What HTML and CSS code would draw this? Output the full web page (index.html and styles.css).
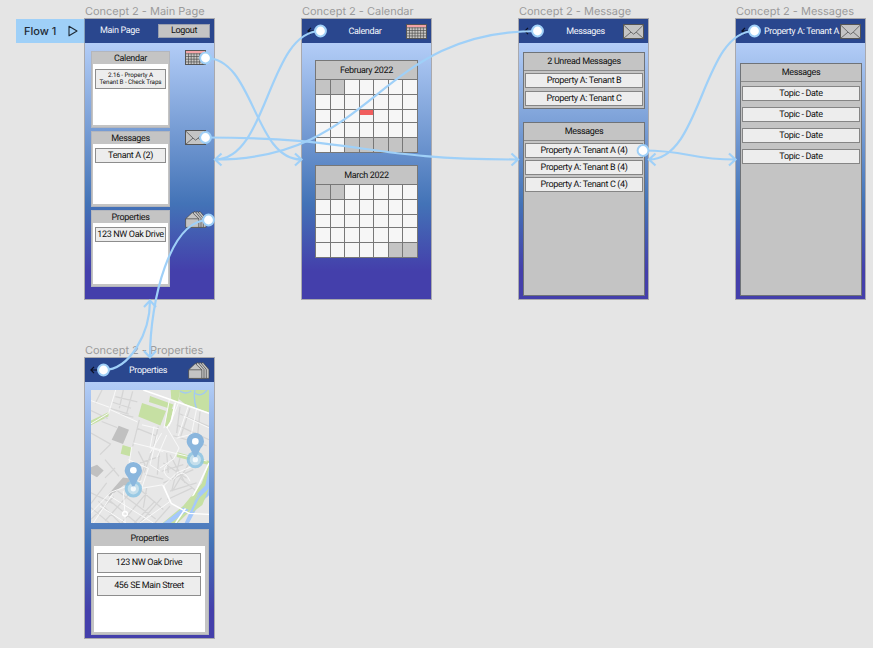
FILE: index.html
```html
<!DOCTYPE html>
<html lang="en">
<head>
<meta charset="utf-8">
<title>Concept 2 prototype</title>
<link rel="stylesheet" href="styles.css">
</head>
<body>
<svg class="defs" aria-hidden="true">
  <symbol id="calendar" viewBox="0 0 21 15">
    <rect x=".5" y=".5" width="20" height="14" fill="#c9c7c4" stroke="#555"/>
    <path d="M1 1h19v2.300H1z" fill="#f4a3a6"/>
    <path d="M1 3.800h19M1 6.500h19M1 9.200h19M1 11.900h19M3.500 3.500v11M6.200 3.500v11M9 3.500v11M11.800 3.500v11M14.600 3.500v11M17.400 3.500v11" stroke="#4a4a4a" stroke-width=".65"/>
  </symbol>
  <symbol id="mail" viewBox="0 0 21 15">
    <rect x=".5" y=".5" width="20" height="14" fill="#c4c4c4" stroke="#555"/>
    <path d="M.7 1l7.300 7.100 2.600 2.100 2.600-2.100L20.300 1M.7 14.300L8 8.100M20.300 14.300l-7.100-6.200" fill="none" stroke="#555" stroke-width=".8"/>
  </symbol>
  <symbol id="houses" viewBox="0 0 22 17">
    <g fill="#c4c4c4" stroke="#444" stroke-width=".7" stroke-linejoin="round">
      <path d="M9 7l5-6.300h1.200L21 7.500v8.900H9z"/>
      <path d="M7 7l4.500-6.300h1.200L18.300 7.500v8.900H7z"/>
      <path d="M5 7L9 .7h1.200L16 7.500v8.900H5z"/>
      <path d="M.6 7.800L7.300 1.500l6.500 6.300v8.600H.6zM.6 7.800h13.200"/>
    </g>
  </symbol>
  <symbol id="back" viewBox="0 0 8 8">
    <path d="M7.500 4H1M4 .8L.9 4 4 7.200" fill="none" stroke="#0b1024" stroke-width="1.200"/>
  </symbol>
</svg>

<main class="canvas">
  <div class="flow"><span>Flow 1</span><svg width="10" height="12" viewBox="0 0 10 12"><path d="M1 1.200L9 6l-8 4.800z" fill="none" stroke="#1e2a35" stroke-width="1.100" stroke-linejoin="round"/></svg></div>

  <section class="node node-main">
    <h2 class="label">Concept 2 - Main Page</h2>
    <div class="frame">
      <header class="bar bar-main"><span class="title">Main Page</span><span class="logout">Logout</span></header>
      <div class="home">
        <div class="cards">
          <div class="card"><h3>Calendar</h3><div class="paper"><p class="item event">2.16 - Property A<br>Tenant B - Check Traps</p></div></div>
          <div class="card"><h3>Messages</h3><div class="paper"><p class="item">Tenant A (2)</p></div></div>
          <div class="card"><h3>Properties</h3><div class="paper"><p class="item">123 NW Oak Drive</p></div></div>
        </div>
        <div class="shortcuts">
          <svg class="icon"><use href="#calendar"/></svg>
          <svg class="icon"><use href="#mail"/></svg>
          <svg class="icon-house"><use href="#houses"/></svg>
        </div>
      </div>
    </div>
  </section>

  <section class="node node-calendar">
    <h2 class="label">Concept 2 - Calendar</h2>
    <div class="frame">
      <header class="bar"><svg class="back"><use href="#back"/></svg><span class="title">Calendar</span><svg class="icon"><use href="#calendar"/></svg></header>
      <div class="months">
        <div class="month"><h3>February 2022</h3>
          <i class="off"></i><i class="off"></i><i></i><i></i><i></i><i></i><i></i>
          <i></i><i></i><i></i><i></i><i></i><i></i><i></i>
          <i></i><i></i><i></i><i class="due"></i><i></i><i></i><i></i>
          <i></i><i></i><i></i><i></i><i></i><i></i><i></i>
          <i></i><i></i><i class="off"></i><i class="off"></i><i class="off"></i><i class="off"></i><i class="off"></i>
        </div>
        <div class="month"><h3>March 2022</h3>
          <i class="off"></i><i class="off"></i><i></i><i></i><i></i><i></i><i></i>
          <i></i><i></i><i></i><i></i><i></i><i></i><i></i>
          <i></i><i></i><i></i><i></i><i></i><i></i><i></i>
          <i></i><i></i><i></i><i></i><i></i><i></i><i></i>
          <i></i><i></i><i></i><i></i><i></i><i class="off"></i><i class="off"></i>
        </div>
      </div>
    </div>
  </section>

  <section class="node node-message">
    <h2 class="label">Concept 2 - Message</h2>
    <div class="frame">
      <header class="bar"><svg class="back"><use href="#back"/></svg><span class="title">Messages</span><svg class="icon"><use href="#mail"/></svg></header>
      <div class="lists">
        <div class="panel unread"><h3>2 Unread Messages</h3><p class="row">Property A: Tenant B</p><p class="row">Property A: Tenant C</p></div>
        <div class="panel inbox"><h3>Messages</h3><p class="row">Property A: Tenant A (4)</p><p class="row">Property A: Tenant B (4)</p><p class="row">Property A: Tenant C (4)</p></div>
      </div>
    </div>
  </section>

  <section class="node node-topics">
    <h2 class="label">Concept 2 - Messages</h2>
    <div class="frame">
      <header class="bar"><svg class="back"><use href="#back"/></svg><span class="title">Property A: Tenant A</span><svg class="icon"><use href="#mail"/></svg></header>
      <div class="lists topics">
        <div class="panel"><h3>Messages</h3><p class="row">Topic - Date</p><p class="row">Topic - Date</p><p class="row">Topic - Date</p><p class="row">Topic - Date</p></div>
      </div>
    </div>
  </section>

  <section class="node node-properties">
    <h2 class="label">Concept 2 - Properties</h2>
    <div class="frame">
      <header class="bar"><svg class="back"><use href="#back"/></svg><span class="title">Properties</span><svg class="icon-house"><use href="#houses"/></svg></header>
      <div class="places">
        <svg class="map" viewBox="33 30 354 401" preserveAspectRatio="none">
          <path d="M33 30h354v401H33z" fill="#e7e7e7"/>
          <g fill="#c6e0a3">
            <path d="M186 69l72 24-17 44-66-27zM210 48l70 26-5 14-68-22zM272 30h28l-6 38-20-8zM300 30h87v68l-72-26-18-14zM264 84l16 4-14 54-12-5zM33 122l54-26-2 14-52 26zM128 196l27 8-5 26-28-8zM292 218l95 26v12l-97-24z"/>
            <path d="M387 250l-22 62-55 67-62 52h45l94-91z"/>
          </g>
          <path d="M387 266L376 318 316 380 250 431h22l52-38 30-44 33-26zM387 310l-42 55-31 66h13l28-54 32-30z" fill="#a5c8fb"/>
          <path d="M345 30q-6 24 5 60M300 33q15 12 34 0M343 38q20 16 38-8" fill="none" stroke="#a2c9f2" stroke-width="4"/>
          <g fill="#c0c0c0"><path d="M116 138l31 12-18 43-34-13zM33 263l18-8 20 18-20 20-18-10zM84 346l45-52 20 3v22l-18-2-43 34z"/></g>
          <g fill="none" stroke="#d5d5d5" stroke-width="3.800">
            <path d="M33 92l50 24M66 30l-20 40M106 50l66 16M90 85l56 18M130 30l-12 55M158 34l-18 66M98 67l55 18M65 125l46 18M33 160l60 34M178 120l-20 80M160 112l-40-10M170 145l60 24M235 140l-15 65M300 80l-10 80M330 85l-28 85M360 95l-10 100M295 100l92 40M290 135l97 45M280 168l100 30M215 215l-22 64M238 215l-6 70M260 220l5 60M175 215l20 40-20 60M180 250l60-20M195 285l55 14M250 250l70 46M245 275l65-20M270 225l45 85M300 235l-25 100M325 255l-48 80M340 270l-90 40M270 335l80-25M300 295l50 40M262 360l75-35M33 340l70 34M80 310l-47 62M112 334l115 85M150 340l-75 85M200 340l-75 90M225 365l-62 66M180 330l70 60M85 360l85 71M55 365l65 66M33 385l55 46M33 420l68-68M245 355l-65 76M270 380l-45 51M200 325l-10 60M75 240l42 50M60 225l30-30M105 265l-30 30"/>
          </g>
          <g fill="none" stroke="#f9f9f9" stroke-width="3">
            <path d="M33 62l55 20M107 30L86 100l-53 32M88 88l84 38M155 202l-8 52M160 190l220 54M186 135l50 12M222 140l-12 64 40 12M232 165l-22 90 30 20M260 166l-30 70M245 160l-35 60M262 145l35 60-15 32-42 28M268 60l-16 85M295 70l-28 70M325 78l-30 90M350 85l-20 100M310 108l77 36M290 175l56-14 12 34M33 400l60-62 92-34M60 380l78 51M90 350l130 81M100 340l-60 91M130 335l5 70v26M187 326l60-10 23 50-90 65M250 320l40-40 70-30M280 300q30-40 50 5M265 250q-30 30 10 50M145 240l60 26-20 60"/>
          </g>
          <g fill="none" stroke="#fff" stroke-width="4.500"><path d="M190 30l85 30 112 40M286 68l-12 55-14 22M250 318l24 54 53 30 60 3M387 250l-35 75-30 54-35 52"/><circle cx="135" cy="403" r="7"/></g>
          <path d="M355 342l-27 50-18-8 24-32zM387 327l-20 50-30 22 20-43z" fill="#c6e0a3"/>
          <g id="pins">
            <circle cx="346" cy="240" r="26" fill="#8bc3e3" opacity=".85"/><circle cx="346" cy="240" r="17" fill="#c5dfec"/>
            <path d="M346 239l-16-33q-10-12-10-21a26 26 0 0 1 52 0q0 9-10 21z" fill="#8ab6dd"/><circle cx="346" cy="185" r="10" fill="#fff"/><circle cx="346" cy="240" r="8" fill="#fff" opacity=".8"/>
            <circle cx="160" cy="328" r="26" fill="#8bc3e3" opacity=".85"/><circle cx="160" cy="328" r="17" fill="#c5dfec"/>
            <path d="M160 327l-16-33q-10-12-10-21a26 26 0 0 1 52 0q0 9-10 21z" fill="#8ab6dd"/><circle cx="160" cy="272" r="10" fill="#fff"/><circle cx="160" cy="328" r="8" fill="#fff" opacity=".8"/>
          </g>
        </svg>
        <div class="card places-card"><h3>Properties</h3><div class="paper"><p class="item">123 NW Oak Drive</p><p class="item">456 SE Main Street</p></div></div>
      </div>
    </div>
  </section>

  <svg class="links" width="873" height="648" viewBox="0 0 873 648">
    <g fill="none" stroke="#9fd0f8" stroke-width="2.200">
      <path d="M206 58C254 58 254 159.500 301 159.500M295 153.500l6.500 6-6.500 6"/>
      <path d="M320.500 31C268 31 268 159.500 215.500 159.500"/>
      <path d="M537.500 31C376 31 376 159.500 215 159.500M221.500 153.500l-6.500 6 6.500 6"/>
      <path d="M206 137.500C362 137.500 362 159.500 518 159.500M511.500 153.500l6.500 6-6.500 6"/>
      <path d="M643 150.500C689 150.500 689 159.500 735.500 159.500M729 153.500l6.500 6-6.500 6"/>
      <path d="M754.500 31C702 31 702 159.500 649 159.500M655.500 153.500l-6.500 6 6.500 6"/>
      <path d="M208.500 220C170 220 150 300 150 357.500M144 351l6 6.500 6-6.500"/>
      <path d="M103.500 370C130 370 150 333 150 300.500M144 307l6-6.500 6 6.500"/>
    </g>
    <g fill="#fff" stroke="#9fd0f8" stroke-width="2">
      <circle cx="205.500" cy="58" r="5.400"/><circle cx="205.500" cy="137.500" r="5.400"/><circle cx="208.500" cy="220" r="5.400"/><circle cx="320.500" cy="31" r="5.400"/><circle cx="537.500" cy="31" r="5.400"/><circle cx="643" cy="150.500" r="5.400"/><circle cx="754.500" cy="31" r="5.400"/><circle cx="103.500" cy="370" r="5.400"/>
    </g>
  </svg>
</main>
</body>
</html>
```
FILE: styles.css
```css
* { box-sizing: border-box; }
body { margin: 0; background: #e5e5e5; font-family: Roboto, "Liberation Sans", sans-serif; text-rendering: geometricPrecision; letter-spacing: -.35px; }
h2, h3, p { margin: 0; font-weight: 400; }
.defs { position: absolute; width: 0; height: 0; }
.canvas { position: relative; width: 873px; height: 648px; overflow: hidden; }
.links { position: absolute; left: 0; top: 0; }

.flow { position: absolute; left: 16px; top: 19px; width: 69px; height: 24px; padding: 0 7px 0 8px; display: flex; align-items: center; justify-content: space-between; background: #9fd0f8; color: #1e2a35; font: 500 11px Inter, sans-serif; letter-spacing: 0; }

.node { position: absolute; width: 129px; }
.node-main { left: 85px; top: 4px; }
.node-calendar { left: 302px; top: 4px; }
.node-message { left: 519px; top: 4px; }
.node-topics { left: 736px; top: 4px; }
.node-properties { left: 85px; top: 343px; }
.label { height: 15px; font: 400 11px/15px Inter, sans-serif; letter-spacing: -.02px; color: #9b9b9b; white-space: nowrap; }
.frame { height: 280px; background: linear-gradient(#b9d3fb 0, #b3cdf7 8.500%, #4373b7 66%, #443fab 90%); box-shadow: 0 0 0 1px rgba(110, 110, 120, .5); }

.bar { height: 24px; padding: 0 4px 0 5px; display: grid; grid-template-columns: 21px minmax(0, 1fr) 21px; align-items: center; background: #2a478e; color: #f4f6fb; font-size: 9px; }
.title { padding-top: 2px; text-align: center; white-space: nowrap; }
.node-calendar .title, .node-properties .title { margin-left: -4px; }
.node-message .title { margin-right: -3px; }
.node-topics .title { margin-right: -1px; }
.back { width: 8px; height: 8px; }
.icon { width: 21px; height: 15px; display: block; }
.icon-house { width: 22px; height: 17px; display: block; }
.bar .icon-house { margin-left: -1px; }
.bar-main { display: flex; justify-content: space-between; padding: 0 4px 2px 15px; }
.logout { width: 52px; height: 14px; margin-top: 1px; background: #c4c4c4; color: #111; text-align: center; border: 1px solid #999fae; line-height: 12px; }

.home { display: flex; justify-content: space-between; padding: 8px 7px 0 6px; }
.cards { width: 79px; display: grid; grid-template-columns: 100%; gap: 3px; }
.card { height: 76.500px; padding: 0 1px 2px; background: #c4c4c4; border: 1px solid #b3b6bd; color: #111; font-size: 9px; text-align: center; }
.card h3 { height: 12px; font-size: 9px; line-height: 14px; }
.paper { height: 60.500px; padding: 4px 2px; background: #fff; }
.item { height: 15px; line-height: 15px; background: #ededed; border: 1px solid #8d8d8d; white-space: nowrap; }
.event { height: 20px; margin-top: 1px; padding-top: 2px; font-size: 6.300px; line-height: 7px; letter-spacing: -.1px; }
.shortcuts { display: flex; flex-direction: column; width: 22px; margin-top: -1px; }
.shortcuts .icon { margin-bottom: 65px; }
.shortcuts .icon-house { margin-top: 1px; }

.months { display: grid; gap: 12px; padding: 17px 13px; }
.month { display: grid; grid-template: 18px 14px 14px 12px 14px 14px / 14px 13px 14px 13px 14px 13px 14px; gap: 1px; width: 103px; padding: 1px; background: #777; }
.month h3 { grid-column: 1 / -1; background: #c4c4c4; color: #111; font-size: 9px; line-height: 20px; text-align: center; }
.month i { background: #f6f6f6; }
.month .off { background: #c4c4c4; }
.month .due { background: linear-gradient(#f15e5e 5px, #f6f6f6 5px); }

.lists { display: grid; gap: 13px; padding: 9px 3px 0 4px; color: #111; font-size: 9px; text-align: center; }
.panel { display: flex; flex-direction: column; padding: 0 1px; background: #c4c4c4; border: 1px solid #6f7378; }
.panel h3 { height: 18px; margin: 0 -1px 2px; border-bottom: 1px solid #8a8a8a; font-size: 9px; line-height: 19px; }
.row { height: 15px; line-height: 15px; background: #ededed; border: 1px solid #858585; }
.unread { height: 57px; gap: 3px; }
.unread h3 { margin-bottom: -1px; }
.inbox { height: 174px; gap: 2.200px; }
.inbox h3 { margin-bottom: -.4px; }
.topics { padding-top: 20px; }
.topics .panel { height: 233px; gap: 6px; }
.topics h3 { margin-bottom: -2px; }

.places { display: grid; gap: 6px; padding: 8px 5px 0 6px; }
.map { width: 118px; height: 133px; display: block; }
.places-card { height: 106px; padding: 0 3px 2px 2px; }
.places-card h3 { height: 16px; line-height: 18px; }
.places-card .paper { height: 86px; padding: 7px 4px 0 3px; display: grid; gap: 3px; align-content: start; }
.places-card .item { height: 20px; line-height: 19px; }
```
